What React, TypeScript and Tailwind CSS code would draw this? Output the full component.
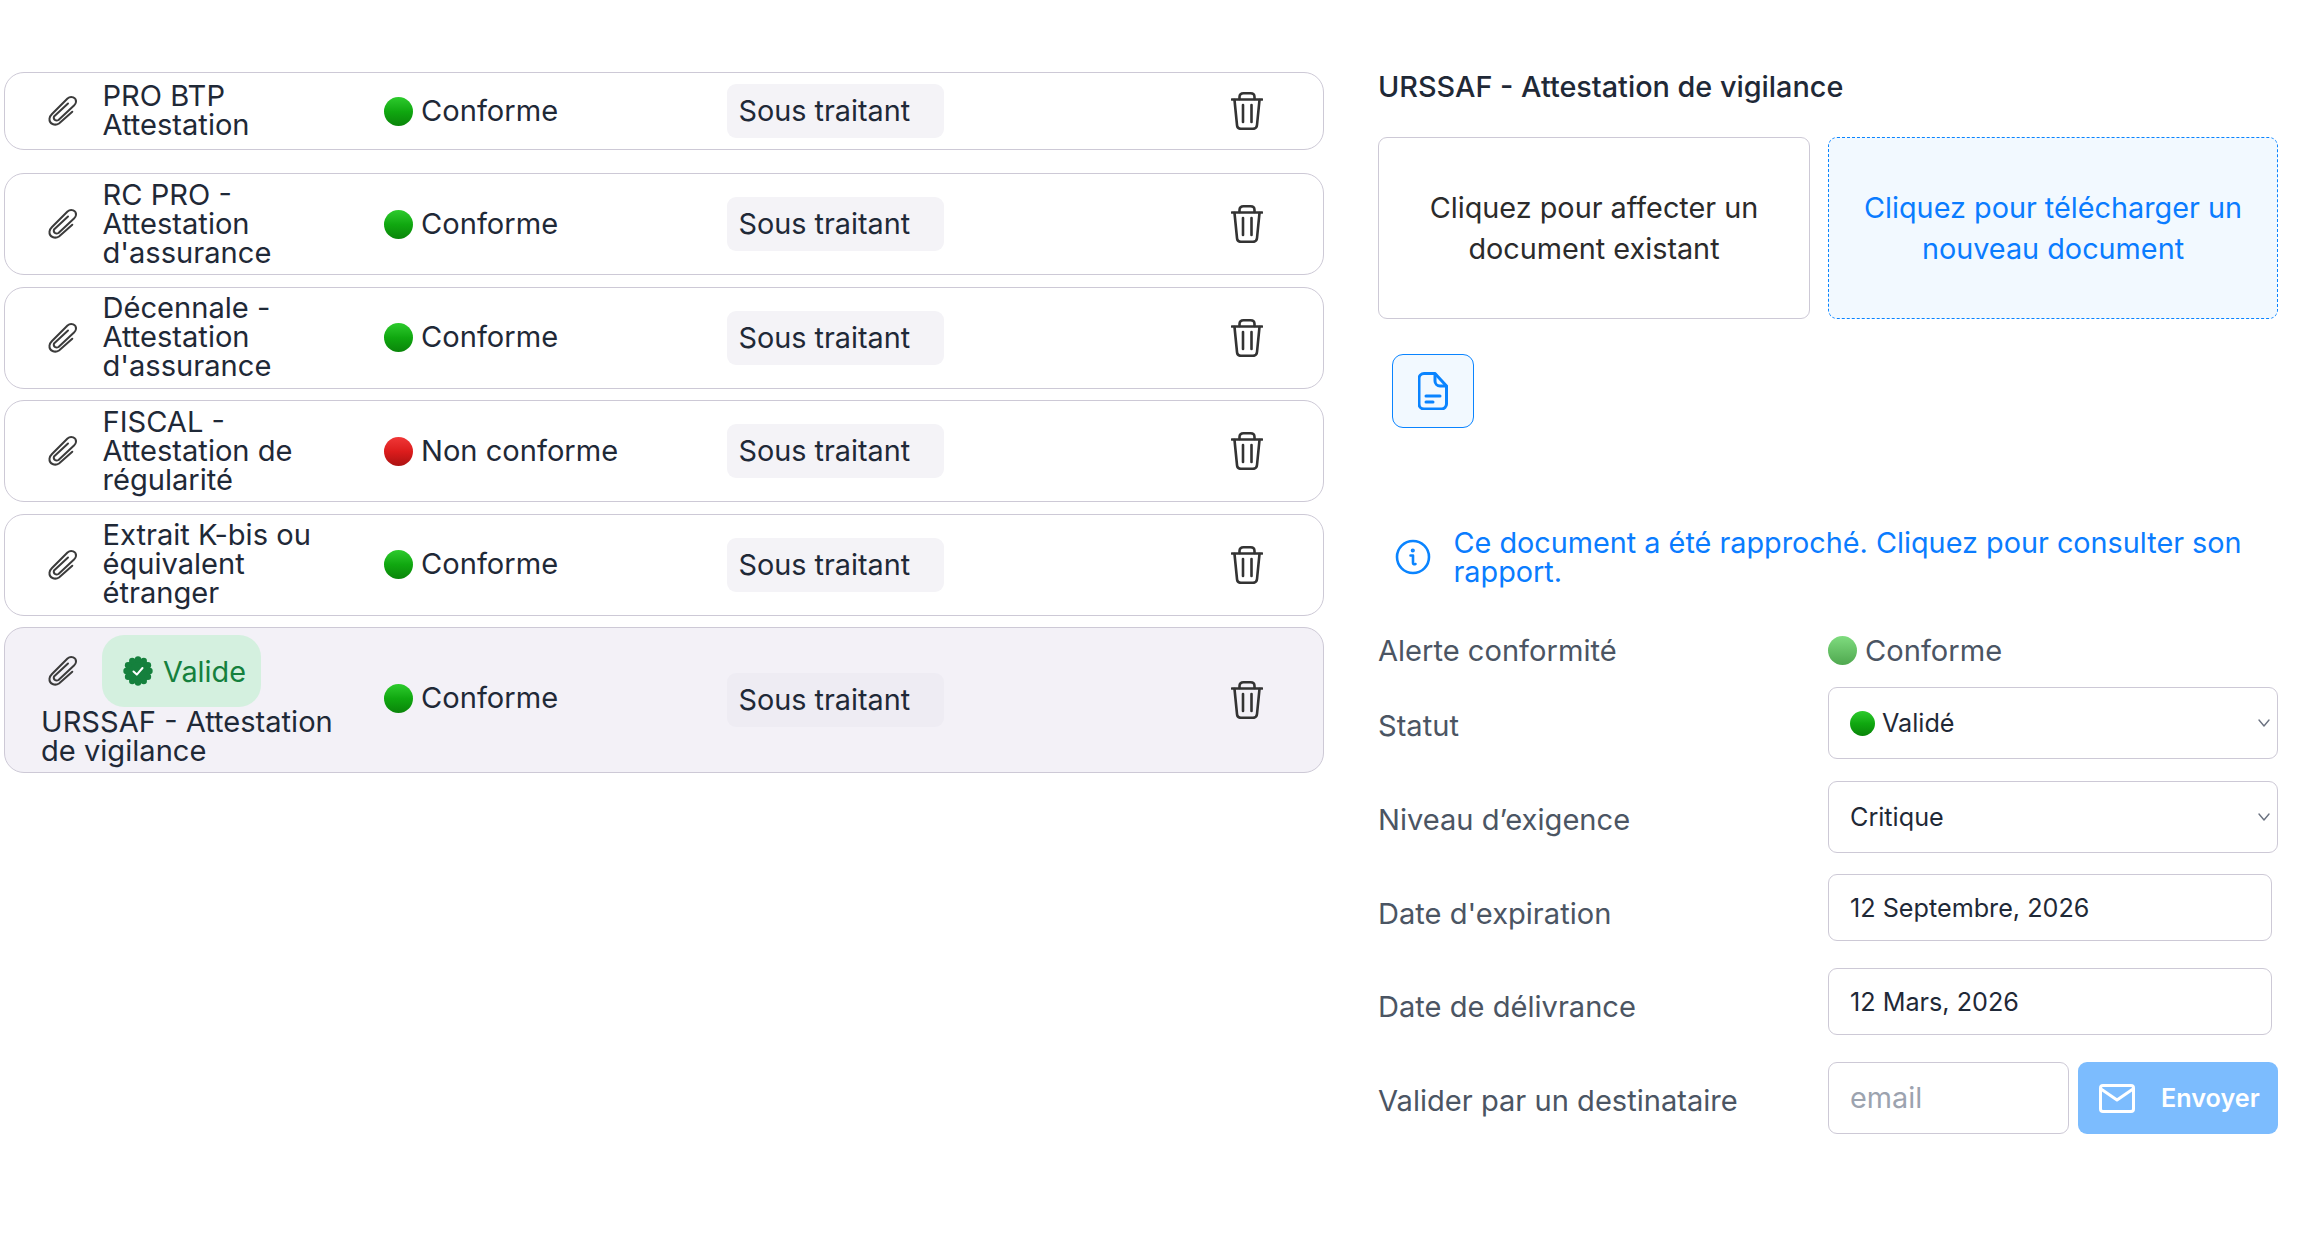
import React from "react";

const rows = [
  { name: ["PRO BTP", "Attestation"], status: "Conforme", first: true },
  { name: ["RC PRO -", "Attestation", "d'assurance"], status: "Conforme" },
  { name: ["Décennale -", "Attestation", "d'assurance"], status: "Conforme" },
  { name: ["FISCAL -", "Attestation de", "régularité"], status: "Non conforme" },
  { name: ["Extrait K-bis ou", "équivalent", "étranger"], status: "Conforme" },
];

function Clip() {
  return (
    <svg width="30" height="32" viewBox="0 0 30 32" fill="none" stroke="#3b3b3b" strokeWidth="2" strokeLinecap="round" strokeLinejoin="round">
      <path d="M24.3 16.7 L11 28.5 C7 31 1 29 1.5 23.5 C1.7 21.5 3 20 4 19 L19.5 3.5 C23 0.5 28.5 2.5 28 7 C27.8 8.5 27 9.5 26 10.5 L10.5 25 C8 26.5 5 24.5 6 21.5 L20 8.5" />
    </svg>
  );
}

function Trash() {
  return (
    <svg width="32" height="38" viewBox="0 0 32 38" fill="none" stroke="#333333" strokeWidth="2.6" strokeLinecap="round" strokeLinejoin="round">
      <path d="M1 7.5 H31" />
      <path d="M8.5 7 V5 C8.5 2.5 10 1.3 12.5 1.3 H19.5 C22 1.3 23.5 2.5 23.5 5 V7" />
      <path d="M3.5 8 L6 33 C6.2 35.5 7.6 36.8 10 36.8 H22 C24.4 36.8 25.8 35.5 26 33 L28.5 8" />
      <path d="M12 13 V30" />
      <path d="M20.5 13 V30" />
    </svg>
  );
}

function Dot({ color, className }: { color: "green" | "red" | "soft"; className?: string }) {
  const bg =
    color === "green"
      ? "from-[#2ccb2c] via-[#10a810] to-[#0a850a]"
      : color === "red"
        ? "from-[#f03636] via-[#dc1c1c] to-[#ac1212]"
        : "from-[#7fdc7f] to-[#4fa84f]";
  return <span className={`inline-block shrink-0 rounded-full bg-linear-to-b ${bg} ${className ?? "w-[29px] h-[29px]"}`} />;
}

function StatusCell({ status, className }: { status: string; className?: string }) {
  return (
    <div className={`flex items-center gap-[8px] pl-[1px] text-[29.1px] ${className ?? ""}`}>
      <Dot color={status === "Conforme" ? "green" : "red"} />
      <span className="pb-[2px]">{status}</span>
    </div>
  );
}

function RoleBadge({ className }: { className?: string }) {
  return (
    <div className={`w-[217px] h-[54px] flex items-center pl-3 pb-[1px] rounded-[9px] ${className ?? "bg-[#f4f3f7]"}`}>
      Sous traitant
    </div>
  );
}

function CheckBadge() {
  const bumps = [0, 30, 60, 90, 120, 150, 180, 210, 240, 270, 300, 330];
  return (
    <svg width="30" height="30" viewBox="0 0 30 30">
      <circle cx="15" cy="15" r="12.5" fill="#15803d" />
      {bumps.map((deg) => (
        <circle
          key={deg}
          cx={15 + 11.5 * Math.cos((deg * Math.PI) / 180)}
          cy={15 + 11.5 * Math.sin((deg * Math.PI) / 180)}
          r="3.2"
          fill="#15803d"
        />
      ))}
      <path d="M10.5 15.5 L13.8 18.6 L19.5 12" fill="none" stroke="#ffffff" strokeWidth="2" strokeLinecap="round" strokeLinejoin="round" />
    </svg>
  );
}

function Chevron() {
  return (
    <svg width="12" height="8" viewBox="0 0 12 8" fill="none" stroke="#6b7280" strokeWidth="1.4" strokeLinecap="round" strokeLinejoin="round">
      <path d="M1 1 L6 7 L11 1" />
    </svg>
  );
}

const gridCols = "grid grid-cols-[378px_343.5px_504.5px_1fr] items-center";

function SelectBox({ children }: { children: React.ReactNode }) {
  return (
    <div className="h-[72px] flex items-center justify-between pl-[21px] pr-[7px] border-[1.5px] border-[#cdc9d6] rounded-[9px] text-[25.2px] text-[#1f2937]">
      <div className="flex items-center gap-[7px]">{children}</div>
      <Chevron />
    </div>
  );
}

function DateBox({ value }: { value: string }) {
  return (
    <div className="w-[444px] h-[67px] flex items-center pl-[21px] pt-[1px] border-[1.5px] border-[#cdc9d6] rounded-[9px] text-[25.2px] text-[#1f2937]">
      {value}
    </div>
  );
}

function Label({ children, className }: { children: React.ReactNode; className?: string }) {
  return <div className={`text-[29.1px] text-[#4b5563] ${className ?? ""}`}>{children}</div>;
}

export default function App() {
  return (
    <div className="w-[2308px] h-[1260px] bg-white flex font-[Inter,sans-serif] text-[28.8px] leading-[29px] text-[#1f2937] overflow-hidden">
      {/* liste des documents */}
      <div className="w-[1319.5px] ml-[4px] pt-[72px] flex flex-col shrink-0">
        {rows.map((r) => (
          <div
            key={r.name.join(" ")}
            className={`${gridCols} border-[1.5px] border-[#cdc9d6] rounded-[20px] ${r.first ? "h-[78px] mb-[23px]" : "h-[102px] mb-[11.5px]"}`}
          >
            <div className="flex items-center pl-[36px]">
              <div className="w-[61.5px] pl-[7px] shrink-0">
                <Clip />
              </div>
              <div className="pb-[2px] text-[29.1px]">
                {r.name.map((line) => (
                  <div key={line}>{line}</div>
                ))}
              </div>
            </div>
            <StatusCell status={r.status} />
            <RoleBadge />
            <Trash />
          </div>
        ))}

        <div className={`${gridCols} h-[146px] border-[1.5px] border-[#cdc9d6] rounded-[20px] bg-[#f3f1f7]`}>
          <div className="pl-[36px] text-[29.1px]">
            <div className="flex items-center">
              <div className="w-[61px] pl-[7px] shrink-0">
                <Clip />
              </div>
              <div className="w-[159px] h-[72px] flex items-center gap-[10px] pl-[21px] rounded-[22px] bg-[#d4f0df] text-[28.8px] text-[#15803d]">
                <CheckBadge />
                <span>Valide</span>
              </div>
            </div>
            <div>URSSAF - Attestation</div>
            <div>de vigilance</div>
          </div>
          <StatusCell status="Conforme" className="mb-[3px]" />
          <RoleBadge className="bg-[#eeecf3]" />
          <Trash />
        </div>
      </div>

      {/* panneau détail */}
      <div className="w-[900px] ml-[54.5px] pt-[72px] flex flex-col shrink-0">
        <h2 className="font-medium">URSSAF - Attestation de vigilance</h2>

        <div className="mt-[36px] grid grid-cols-[432px_450px] gap-x-[18px] leading-[41px] text-center">
          <div className="h-[182px] flex items-center justify-center px-[20px] border-[1.5px] border-[#cdc9d6] rounded-[9px] text-[#2b2b2b]">
            Cliquez pour affecter un document existant
          </div>
          <div className="h-[182px] flex items-center justify-center px-[20px] border-[1.5px] border-dashed border-[#0a84ff] rounded-[9px] bg-[#f2f9ff] text-[#0a7cff]">
            Cliquez pour télécharger un nouveau document
          </div>
        </div>

        <div className="mt-[35px] ml-[14px] w-[82px] h-[74px] flex items-center justify-center border-[1.5px] border-[#0a84ff] rounded-[11px] bg-[#f2f9ff]">
          <svg width="30" height="38" viewBox="0 0 30 38" fill="none" stroke="#0a84ff" strokeWidth="3" strokeLinecap="round" strokeLinejoin="round">
            <path d="M6 1.5 H17 L28.5 14 V32 A5 5 0 0 1 23.5 37 H6 A5 5 0 0 1 1 32 V6.5 A5 5 0 0 1 6 1.5 Z" />
            <path d="M17 2 V9 A5 5 0 0 0 22 14 H28" />
            <path d="M8 24 H22" />
            <path d="M8 30 H15" />
          </svg>
        </div>

        <div className="mt-[100px] pl-[17px] flex items-center gap-[22.5px] text-[#0a7cff]">
          <svg width="36" height="36" viewBox="0 0 36 36" fill="none" stroke="#0a84ff" strokeWidth="2.6" strokeLinecap="round" strokeLinejoin="round" className="shrink-0">
            <circle cx="18" cy="18" r="16" />
            <path d="M15.5 16.5 H18 V24 C18 25.2 18.8 25.6 20.5 25" />
            <circle cx="17.8" cy="11.5" r="0.8" fill="#0a84ff" />
          </svg>
          <span>Ce document a été rapproché. Cliquez pour consulter son rapport.</span>
        </div>

        <div className="mt-[50px] grid grid-cols-[450px_1fr]">
          <Label>Alerte conformité</Label>
          <div className="flex items-center gap-[8px] text-[29.1px] text-[#4b5563]">
            <Dot color="soft" />
            <span>Conforme</span>
          </div>
        </div>

        <div className="mt-[22px] grid grid-cols-[450px_1fr] items-center">
          <Label className="pt-[5px]">Statut</Label>
          <SelectBox>
            <Dot color="green" className="w-[25px] h-[25px]" />
            <span>Validé</span>
          </SelectBox>
        </div>

        <div className="mt-[22px] grid grid-cols-[450px_1fr] items-center">
          <Label className="pt-[5px]">Niveau d’exigence</Label>
          <SelectBox>
            <span>Critique</span>
          </SelectBox>
        </div>

        <div className="mt-[21px] grid grid-cols-[450px_1fr] items-center">
          <Label className="pt-[12px]">Date d'expiration</Label>
          <DateBox value="12 Septembre, 2026" />
        </div>

        <div className="mt-[27px] grid grid-cols-[450px_1fr] items-center">
          <Label className="pt-[10px]">Date de délivrance</Label>
          <DateBox value="12 Mars, 2026" />
        </div>

        <div className="mt-[27px] grid grid-cols-[450px_1fr] items-center">
          <Label className="pt-[5px]">Valider par un destinataire</Label>
          <div className="flex gap-[9px]">
            <div className="w-[241px] h-[72px] flex items-center pl-[21px] pb-[2px] border-[1.5px] border-[#cdc9d6] rounded-[9px] text-[#9ca3af]">
              email
            </div>
            <div className="w-[200px] h-[72px] flex items-center gap-[26px] pl-[21px] rounded-[9px] bg-[#7cbcfe] text-white text-[25.2px] font-semibold">
              <svg width="36" height="29" viewBox="0 0 36 29" fill="none" stroke="#ffffff" strokeWidth="3" strokeLinecap="round" strokeLinejoin="round" className="shrink-0">
                <rect x="1.5" y="1.5" width="33" height="26" rx="2.5" />
                <path d="M2 5 L18 16 L34 5" />
              </svg>
              <span>Envoyer</span>
            </div>
          </div>
        </div>
      </div>
    </div>
  );
}
